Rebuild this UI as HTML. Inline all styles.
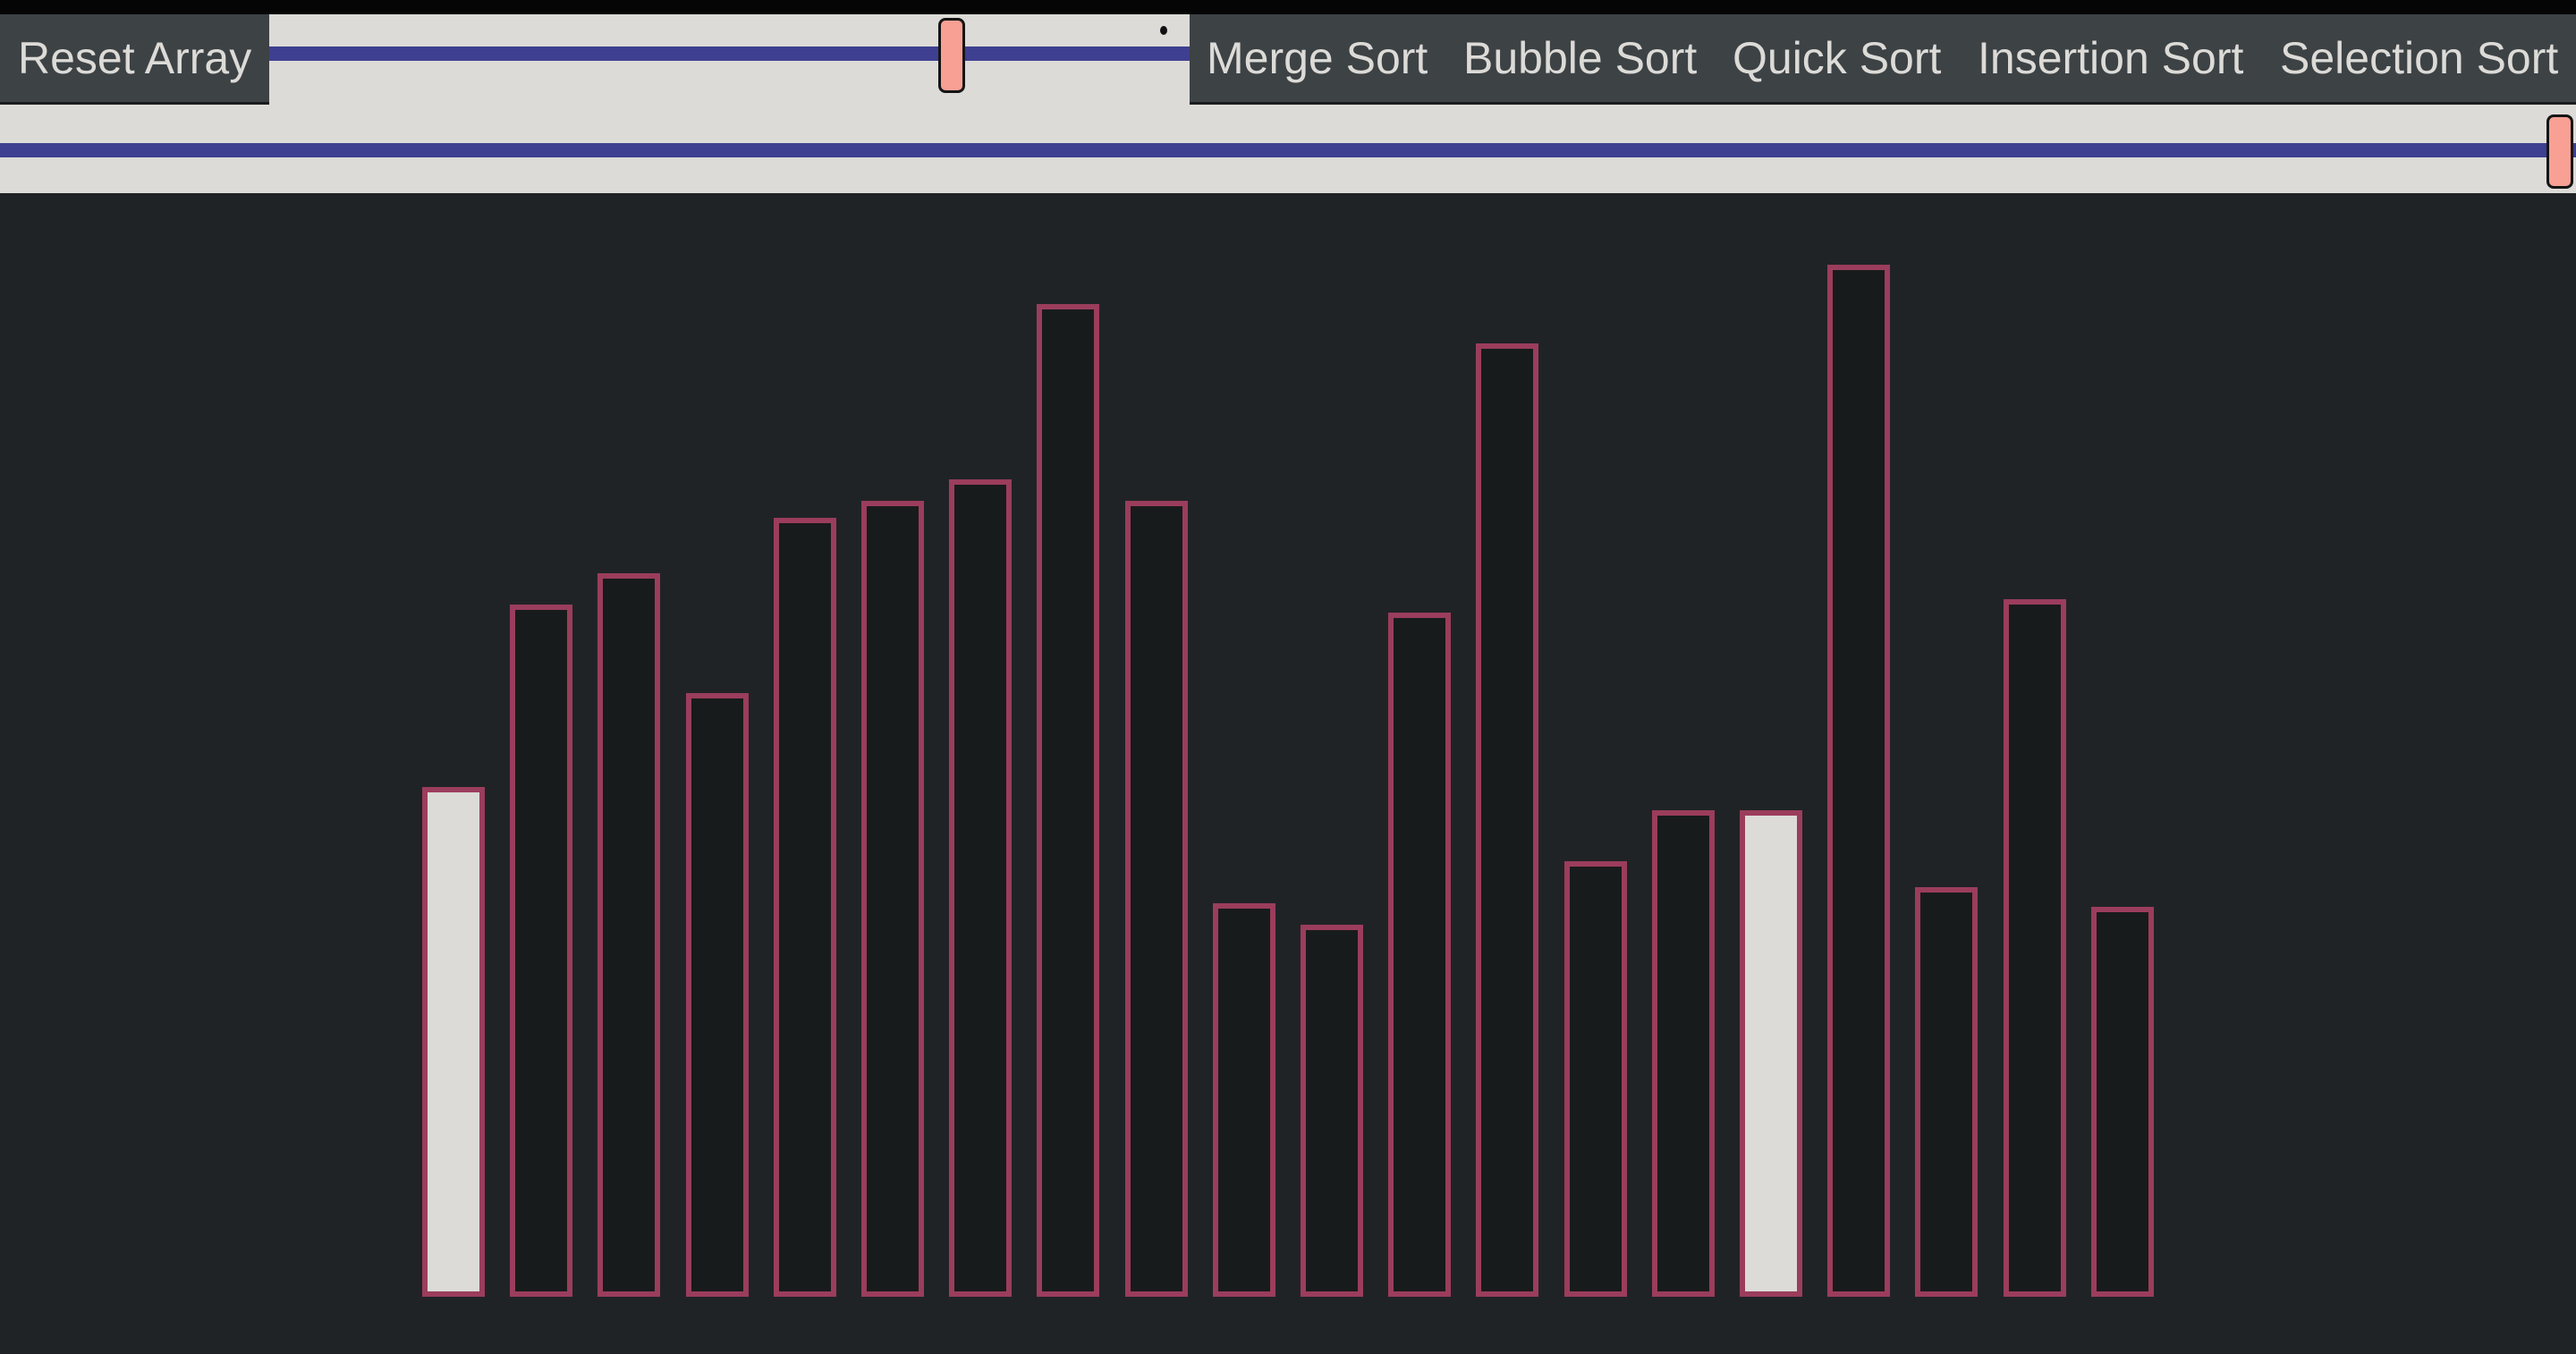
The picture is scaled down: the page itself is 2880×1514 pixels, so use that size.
<!DOCTYPE html>
<html><head><style>
*{margin:0;padding:0;box-sizing:border-box}
body{width:2880px;height:1514px;background:#202326;position:relative;overflow:hidden;font-family:"Liberation Sans",sans-serif}
.abs{position:absolute}
.btn{position:absolute;top:16px;height:98px;line-height:98px;color:#dcdbd7;font-size:50px;white-space:nowrap}
.bar{position:absolute;width:70px;border:6px solid #9b3d5c;background:#181b1c;bottom:64px}
.thumb{position:absolute;background:#f7a093;border:3px solid #151515;border-radius:8px}
</style></head><body>
<div class="abs" style="left:0;top:0;width:2880px;height:16px;background:#050505"></div>
<div class="abs" style="left:0;top:16px;width:2880px;height:98px;background:#3d4245"></div>
<div class="abs" style="left:0;top:114px;width:2880px;height:3px;background:#1a1c1e"></div>
<div class="abs" style="left:301px;top:16px;width:1029px;height:101px;background:#dcdbd7"></div>
<div class="abs" style="left:301px;top:52px;width:1029px;height:16px;background:#3f3f91"></div>
<div class="thumb" style="left:1049px;top:20px;width:30px;height:84px"></div>
<div class="abs" style="left:1297px;top:29px;width:8px;height:10px;border-radius:50%;background:#111"></div>
<div class="btn" style="left:20px">Reset Array</div>
<div class="btn" style="left:1349px">Merge Sort</div>
<div class="btn" style="left:1636px">Bubble Sort</div>
<div class="btn" style="left:1937px">Quick Sort</div>
<div class="btn" style="left:2211px">Insertion Sort</div>
<div class="btn" style="left:2549px">Selection Sort</div>
<div class="abs" style="left:0;top:117px;width:2880px;height:99px;background:#dcdbd7"></div>
<div class="abs" style="left:0;top:160px;width:2880px;height:16px;background:#3f3f91"></div>
<div class="thumb" style="left:2847px;top:128px;width:30px;height:83px"></div>
<div class="bar" style="left:472px;top:880px;background:#dcdbd7"></div>
<div class="bar" style="left:570px;top:676px"></div>
<div class="bar" style="left:668px;top:641px"></div>
<div class="bar" style="left:767px;top:775px"></div>
<div class="bar" style="left:865px;top:579px"></div>
<div class="bar" style="left:963px;top:560px"></div>
<div class="bar" style="left:1061px;top:536px"></div>
<div class="bar" style="left:1159px;top:340px"></div>
<div class="bar" style="left:1258px;top:560px"></div>
<div class="bar" style="left:1356px;top:1010px"></div>
<div class="bar" style="left:1454px;top:1034px"></div>
<div class="bar" style="left:1552px;top:685px"></div>
<div class="bar" style="left:1650px;top:384px"></div>
<div class="bar" style="left:1749px;top:963px"></div>
<div class="bar" style="left:1847px;top:906px"></div>
<div class="bar" style="left:1945px;top:906px;background:#dcdbd7"></div>
<div class="bar" style="left:2043px;top:296px"></div>
<div class="bar" style="left:2141px;top:992px"></div>
<div class="bar" style="left:2240px;top:670px"></div>
<div class="bar" style="left:2338px;top:1014px"></div>
</body></html>
